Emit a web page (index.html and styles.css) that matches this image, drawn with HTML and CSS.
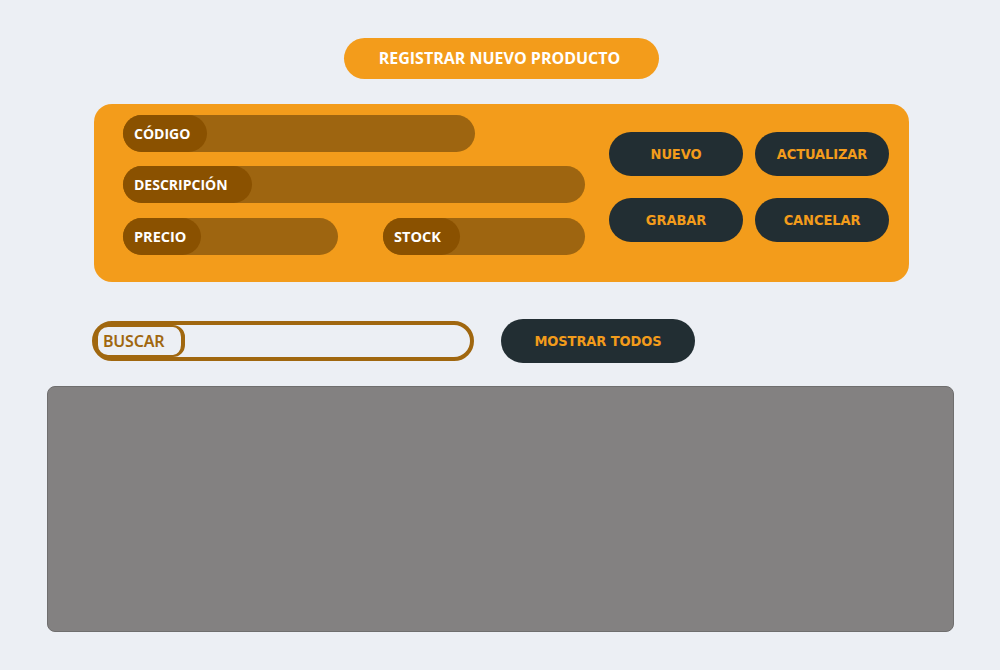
FILE: index.html
```html
<!DOCTYPE html>
<html lang="es">
<head>
<meta charset="utf-8">
<title>Registrar nuevo producto</title>
<link rel="stylesheet" href="styles.css">
</head>
<body>
<div class="page">
  <div class="title-row">
    <div class="title">REGISTRAR NUEVO PRODUCTO</div>
  </div>
  <div class="panel">
    <div class="fields">
      <div class="row">
        <div class="field w-codigo"><span class="label l-codigo">CÓDIGO</span></div>
      </div>
      <div class="row">
        <div class="field w-desc"><span class="label l-desc">DESCRIPCIÓN</span></div>
      </div>
      <div class="row split">
        <div class="field w-precio"><span class="label l-precio">PRECIO</span></div>
        <div class="field w-stock"><span class="label l-stock">STOCK</span></div>
      </div>
    </div>
    <div class="buttons">
      <button class="btn">NUEVO</button>
      <button class="btn">ACTUALIZAR</button>
      <button class="btn">GRABAR</button>
      <button class="btn">CANCELAR</button>
    </div>
  </div>
  <div class="search-row">
    <div class="search"><span class="search-label">BUSCAR</span></div>
    <button class="btn btn-wide">MOSTRAR TODOS</button>
  </div>
  <div class="table"></div>
</div>
</body>
</html>
```

FILE: styles.css
```css
* { box-sizing: border-box; }
html, body { margin: 0; padding: 0; }
body {
  background: #ECEFF4;
  font-family: "Open Sans", "Noto Sans", sans-serif;
  width: 1000px;
  height: 670px;
  overflow: hidden;
}
.page {
  display: flex;
  flex-direction: column;
  padding-top: 38px;
}
.title-row {
  display: flex;
  justify-content: center;
  padding-left: 3px;
}
.title {
  width: 315px;
  height: 41px;
  border-radius: 21px;
  background: #F39C1B;
  color: #fff;
  font-weight: 700;
  font-size: 16px;
  display: flex;
  align-items: center;
  justify-content: center;
  padding-right: 4px;
  padding-bottom: 1px;
}
.panel {
  margin: 25px 0 0 94px;
  width: 815px;
  height: 178px;
  background: #F39C1B;
  border-radius: 18px;
  padding: 11px 0 0 29px;
  display: flex;
  gap: 24px;
}
.fields {
  width: 462px;
  display: flex;
  flex-direction: column;
  gap: 14px;
}
.row { display: flex; }
.row.split { justify-content: space-between; margin-top: 1px; }
.field {
  height: 37px;
  border-radius: 19px;
  background: #9E6510;
  display: flex;
}
.w-codigo { width: 352px; }
.w-desc { width: 462px; }
.w-precio { width: 215px; }
.w-stock { width: 202px; }
.label {
  height: 37px;
  border-radius: 19px;
  background: #8A5100;
  color: #fff;
  font-weight: 700;
  font-size: 14px;
  display: flex;
  align-items: center;
  padding: 0 0 0 11px;
}
.l-codigo { width: 84px; }
.l-desc { width: 129px; }
.l-precio { width: 78px; }
.l-stock { width: 77px; }
.l-precio, .l-stock { font-size: 14.5px; }
.buttons {
  padding-top: 17px;
  display: grid;
  grid-template-columns: 134px 134px;
  grid-auto-rows: 44px;
  column-gap: 12px;
  row-gap: 22px;
  align-content: start;
}
.btn {
  border: none;
  margin: 0;
  height: 44px;
  border-radius: 22px;
  background: #222E33;
  color: #F39C1B;
  font-family: "DejaVu Sans Condensed", "DejaVu Sans", sans-serif;
  font-weight: 700;
  font-size: 14.5px;
  letter-spacing: -0.1px;
  padding: 0;
}
.search-row {
  margin: 37px 0 0 92px;
  display: flex;
  align-items: center;
  gap: 27px;
}
.search {
  width: 382px;
  height: 40px;
  border: 4px solid #A0670F;
  border-radius: 20px;
  background: #ECEFF4;
  display: flex;
}
.search-label {
  height: 32px;
  width: 89px;
  border: 2px solid #A0670F;
  border-right-width: 4px;
  border-radius: 12px;
  background: #ECEFF4;
  color: #A0670F;
  font-family: "Noto Sans", "Open Sans", sans-serif;
  font-size: 16px;
  font-weight: 600;
  display: flex;
  align-items: center;
  padding: 0 0 0 5px;
  letter-spacing: -0.2px;
}
.btn-wide { width: 194px; }
.table {
  margin: 23px 0 0 47px;
  width: 907px;
  height: 246px;
  background: #838181;
  border: 1px solid #6F6E6E;
  border-radius: 8px;
}
```
